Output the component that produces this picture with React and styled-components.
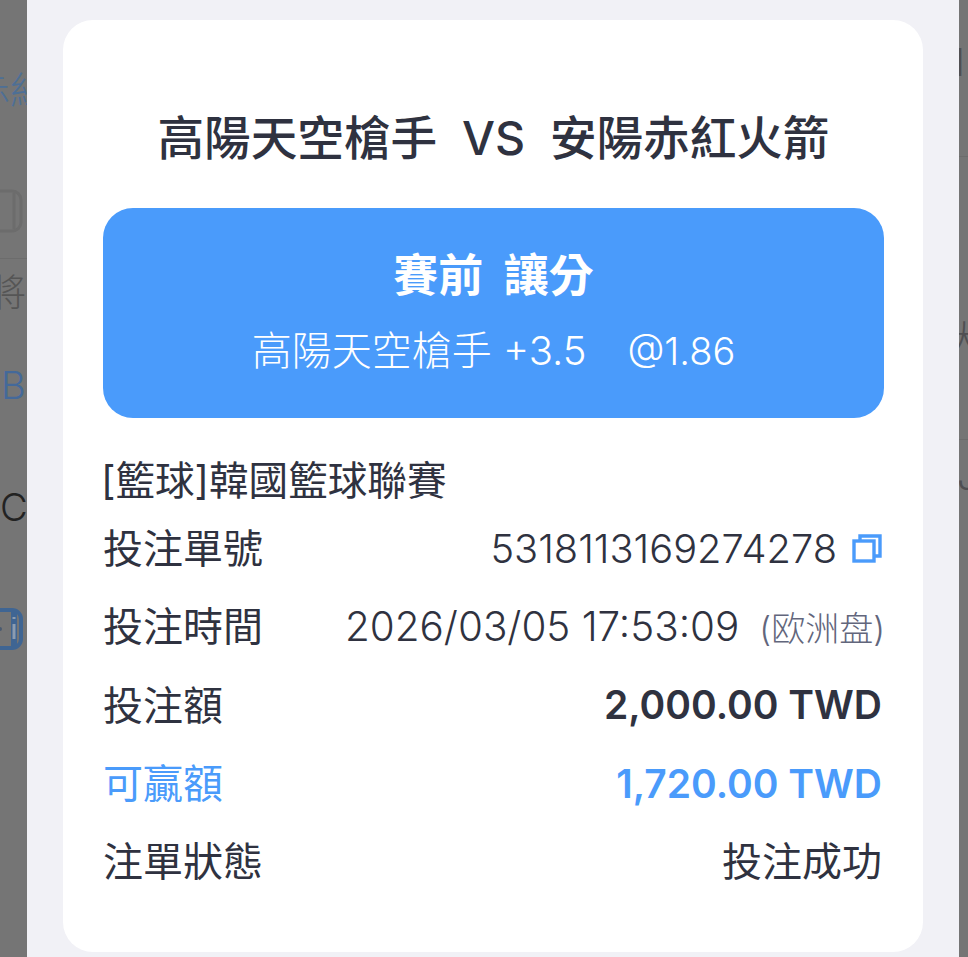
import styled, { createGlobalStyle } from 'styled-components';

const GlobalStyle = createGlobalStyle`
  html, body {
    margin: 0;
    padding: 0;
    background: #757575;
  }
  * {
    box-sizing: border-box;
  }
`;

const FONT = `Inter, "Noto Sans CJK TC", sans-serif`;

const Page = styled.div`
  width: 968px;
  height: 957px;
  overflow: hidden;
  display: grid;
  grid-template-columns: 27px 932px 9px;
  font-family: ${FONT};
  background: #757575;
`;

const Strip = styled.div`
  display: flex;
  flex-direction: column;
  align-items: flex-start;
  overflow: hidden;
  min-width: 0;
`;

const Peek = styled.div`
  flex: none;
  height: ${p => p.$h}px;
  margin-top: ${p => p.$top}px;
  margin-left: ${p => p.$shift || 0}px;
  line-height: ${p => p.$h}px;
  font-size: ${p => p.$size || 38}px;
  font-weight: 300;
  white-space: nowrap;
  color: ${p => p.$color || '#505054'};
`;

const PeekRule = styled.div`
  flex: none;
  align-self: stretch;
  height: 1px;
  margin-top: ${p => p.$top}px;
  background: #6c6c6c;
`;

const PeekIcon = styled.svg`
  flex: none;
  display: block;
  margin-top: ${p => p.$top}px;
`;

const Sheet = styled.main`
  background: #f1f1f6;
  padding: 20px 36px 0;
`;

const Card = styled.section`
  height: 932px;
  background: #fff;
  border-radius: 30px;
  padding: 0 39px 0 40px;
  display: flex;
  flex-direction: column;
`;

const MatchTitle = styled.h1`
  margin: 90px 0 0;
  height: 56px;
  font-size: 46.6px;
  line-height: 56px;
  font-weight: 500;
  color: #2f3240;
  text-align: center;
  white-space: pre;
`;

const BetBox = styled.div`
  margin-top: 42px;
  height: 210px;
  border-radius: 30px;
  background: #4a9bfb;
  color: #fff;
  display: flex;
  flex-direction: column;
  align-items: center;
  padding-top: 40px;
`;

const BetType = styled.div`
  font-size: 45px;
  line-height: 56px;
  font-weight: 700;
  word-spacing: 10px;
  white-space: pre;
`;

const BetPick = styled.div`
  margin-top: 23px;
  font-size: 40px;
  line-height: 48px;
  font-weight: 300;
  white-space: pre;
`;

const PickOdds = styled.span`
  margin-left: 41px;
  font-size: 38px;
`;

const League = styled.div`
  margin: 38px 0 0 -2px;
  font-size: 39.6px;
  line-height: 50px;
  font-weight: 400;
  color: #2f3240;
  white-space: nowrap;
`;

const Rows = styled.div`
  margin-top: 3px;
  padding-right: 2px;
  display: flex;
  flex-direction: column;
`;

const Row = styled.div`
  height: 78.3px;
  display: flex;
  align-items: center;
  justify-content: space-between;
  color: ${p => (p.$accent ? '#4a9bfb' : '#2f3240')};
  font-size: 40px;
  font-weight: 400;
`;

const Label = styled.span`
  margin-bottom: 4px;
`;

const Value = styled.div`
  display: flex;
  align-items: center;
  font-size: ${p => p.$size || 40}px;
  font-weight: ${p => p.$weight || 300};
  white-space: nowrap;
`;

const Status = styled(Value)`
  margin-bottom: 4px;
`;

const Handicap = styled.span`
  margin-left: 20px;
  margin-right: -3px;
  font-size: 34px;
  font-weight: 300;
  color: #62667c;
`;

const CopyIcon = styled.svg`
  margin-left: 15px;
  display: block;
`;

const rows = [
  { label: '投注額', value: '2,000.00 TWD' },
  { label: '可贏額', value: '1,720.00 TWD', accent: true },
];

const App = () => (
  <>
    <GlobalStyle />
    <Page>
      <Strip>
        <Peek $top={68} $h={44} $shift={-28} $color="#4d6f96">赤紅</Peek>
        <PeekIcon $top={76} width="27" height="46" viewBox="0 0 27 46" fill="none" stroke="#6c6c6c" strokeWidth="3">
          <rect x="-20" y="3" width="41" height="40" rx="9" />
          <path d="M14 5v36" />
        </PeekIcon>
        <PeekRule $top={24} />
        <Peek $top={11} $h={44} $shift={-12} $color="#555">將</Peek>
        <Peek $top={49} $h={44} $shift={1} $color="#44699a">B</Peek>
        <Peek $top={78} $h={44} $color="#222">C</Peek>
        <PeekIcon $top={78} width="27" height="44" viewBox="0 0 27 44" fill="none">
          <rect x="-20" y="3" width="41" height="38" rx="9" stroke="#3f6593" strokeWidth="4" />
          <path d="M14 4v36" stroke="#3f6593" strokeWidth="6" />
          <path d="M14 10v2M14 17v15" stroke="#8c9cb0" strokeWidth="3" />
          <circle cx="0" cy="22" r="2" fill="#4a5a70" />
        </PeekIcon>
      </Strip>
      <Sheet>
        <Card>
          <MatchTitle>高陽天空槍手  VS  安陽赤紅火箭</MatchTitle>
          <BetBox>
            <BetType>賽前 讓分</BetType>
            <BetPick>高陽天空槍手 +3.5<PickOdds>@1.86</PickOdds></BetPick>
          </BetBox>
          <League>[籃球]韓國籃球聯賽</League>
          <Rows>
            <Row>
              <Label>投注單號</Label>
              <Value $size={39.8}>
                5318113169274278
                <CopyIcon width="30" height="30" viewBox="0 0 30 30" fill="none" stroke="#4a9bfb" strokeWidth="3.4">
                  <rect x="2" y="8" width="20" height="20" />
                  <path d="M8 7V3h20v20h-5" />
                </CopyIcon>
              </Value>
            </Row>
            <Row>
              <Label>投注時間</Label>
              <Value $size={40.4}>
                2026/03/05 17:53:09
                <Handicap>(欧洲盘)</Handicap>
              </Value>
            </Row>
            {rows.map(row => (
              <Row key={row.label} $accent={row.accent}>
                <Label>{row.label}</Label>
                <Value $size={39} $weight={600}>{row.value}</Value>
              </Row>
            ))}
            <Row>
              <Label>注單狀態</Label>
              <Status $weight={400}>投注成功</Status>
            </Row>
          </Rows>
        </Card>
      </Sheet>
      <Strip>
        <Peek $top={42} $h={40} $shift={-4} $color="#4f4f52">I</Peek>
        <PeekRule $top={74} />
        <Peek $top={160} $h={44} $shift={-14} $color="#4f4f52">大</Peek>
        <PeekRule $top={78} />
        <Peek $top={14} $h={44} $shift={-2} $color="#4f4f52">J</Peek>
      </Strip>
    </Page>
  </>
);

export default App;
